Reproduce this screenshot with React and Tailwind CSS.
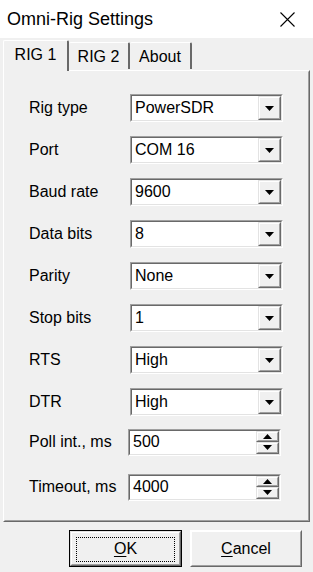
import React from "react";

const FONT = "font-['Liberation_Sans',Arial,sans-serif]";

function Sunken({ children, className = "" }) {
  return (
    <div className={`border border-t-[#a0a0a0] border-l-[#a0a0a0] border-b-white border-r-white ${className}`}>
      <div className="h-full border border-t-[#696969] border-l-[#696969] border-b-[#e3e3e3] border-r-[#e3e3e3] bg-white flex items-stretch">
        {children}
      </div>
    </div>
  );
}

function Raised({ children, className = "" }) {
  return (
    <div className={`border border-t-[#e3e3e3] border-l-[#e3e3e3] border-b-[#696969] border-r-[#696969] bg-[#f0f0f0] ${className}`}>
      <div className="h-full border border-t-white border-l-white border-b-[#a0a0a0] border-r-[#a0a0a0] flex items-center justify-center">
        {children}
      </div>
    </div>
  );
}

function DownArrow() {
  return (
    <svg width="9" height="5" viewBox="0 0 9 5" className="block">
      <polygon points="0,0 9,0 4.5,5" fill="#000" />
    </svg>
  );
}
function UpArrow() {
  return (
    <svg width="9" height="5" viewBox="0 0 9 5" className="block">
      <polygon points="0,5 9,5 4.5,0" fill="#000" />
    </svg>
  );
}

function SelectRow({ label, value }) {
  return (
    <div className="h-[42px] flex items-center">
      <div className="w-[101px] text-[16px] text-black leading-none">{label}</div>
      <Sunken className="w-[153px] h-[28px]">
        <div className="flex-1 flex items-center pl-[3px] text-[16px] leading-none text-black">{value}</div>
        <Raised className="w-[23px] h-full">
          <DownArrow />
        </Raised>
      </Sunken>
    </div>
  );
}

function SpinRow({ label, value, h }) {
  return (
    <div className={`${h} flex items-center`}>
      <div className="w-[99px] text-[16px] text-black leading-none">{label}</div>
      <Sunken className="w-[153px] h-[27px]">
        <div className="flex-1 flex items-center pl-[3px] text-[16px] leading-none text-black">{value}</div>
        <div className="w-[23px] h-full flex flex-col">
          <Raised className="flex-1">
            <UpArrow />
          </Raised>
          <Raised className="flex-1">
            <DownArrow />
          </Raised>
        </div>
      </Sunken>
    </div>
  );
}

export default function App() {
  return (
    <div className={`w-[313px] h-[572px] bg-[#f0f0f0] flex flex-col ${FONT} overflow-hidden`}>
      {/* Title bar */}
      <div className="h-[38px] bg-white flex items-center justify-between pl-[7px] pr-[18px] shrink-0">
        <div className="text-[18px] leading-none text-black">Omni-Rig Settings</div>
        <svg width="15" height="15" viewBox="0 0 15 15">
          <path d="M0.5 0.5 L14.5 14.5 M14.5 0.5 L0.5 14.5" stroke="#000" strokeWidth="1.1" fill="none" />
        </svg>
      </div>

      {/* Tabs */}
      <div className="h-[32px] flex items-end pl-[3px] shrink-0 relative z-10">
        <div className="h-[31px] w-[66px] bg-[#f0f0f0] border-t border-l border-white border-r-2 border-r-[#696969] rounded-t-[2px] flex items-start justify-center pt-[6px] text-[16px] leading-none text-black -mb-[1px]">
          RIG 1
        </div>
        <div className="h-[27px] w-[61px] mb-[1px] border-t border-white border-r-2 border-r-[#696969] rounded-t-[2px] flex items-center justify-center pt-[2px] text-[16px] leading-none text-black">
          RIG 2
        </div>
        <div className="h-[27px] w-[62px] mb-[1px] border-t border-white border-r-2 border-r-[#696969] rounded-t-[2px] flex items-center justify-center pt-[2px] text-[16px] leading-none text-black">
          About
        </div>
      </div>

      {/* Panel */}
      <div className="ml-[3px] mr-[3px] h-[452px] border border-t-white border-l-white border-r-[#696969] border-b-[#696969] shrink-0">
        <div className="h-full border border-t-[#f0f0f0] border-l-[#f0f0f0] border-r-[#a0a0a0] border-b-[#a0a0a0] pl-[24px] pt-[15px] flex flex-col">
          <SelectRow label="Rig type" value="PowerSDR" />
          <SelectRow label="Port" value="COM 16" />
          <SelectRow label="Baud rate" value="9600" />
          <SelectRow label="Data bits" value="8" />
          <SelectRow label="Parity" value="None" />
          <SelectRow label="Stop bits" value="1" />
          <SelectRow label="RTS" value="High" />
          <SelectRow label="DTR" value="High" />
          <SpinRow label="Poll int., ms" value="500" h="h-[38px]" />
          <SpinRow label="Timeout, ms" value="4000" h="h-[52px]" />
        </div>
      </div>

      {/* Buttons */}
      <div className="flex-1 flex items-start justify-end gap-[8px] pt-[8px] pr-[11px]">
        <div className="w-[113px] h-[37px] border border-black">
          <Raised className="h-full relative">
            <div className="absolute left-[5px] right-[5px] top-[5px] bottom-[3px] border border-dotted border-black" />
            <span className="text-[16px] leading-none text-black"><u className="underline-offset-2">O</u>K</span>
          </Raised>
        </div>
        <Raised className="w-[112px] h-[37px] border-t-white border-l-white">
          <span className="text-[16px] leading-none text-black"><u className="underline-offset-2">C</u>ancel</span>
        </Raised>
      </div>
    </div>
  );
}
